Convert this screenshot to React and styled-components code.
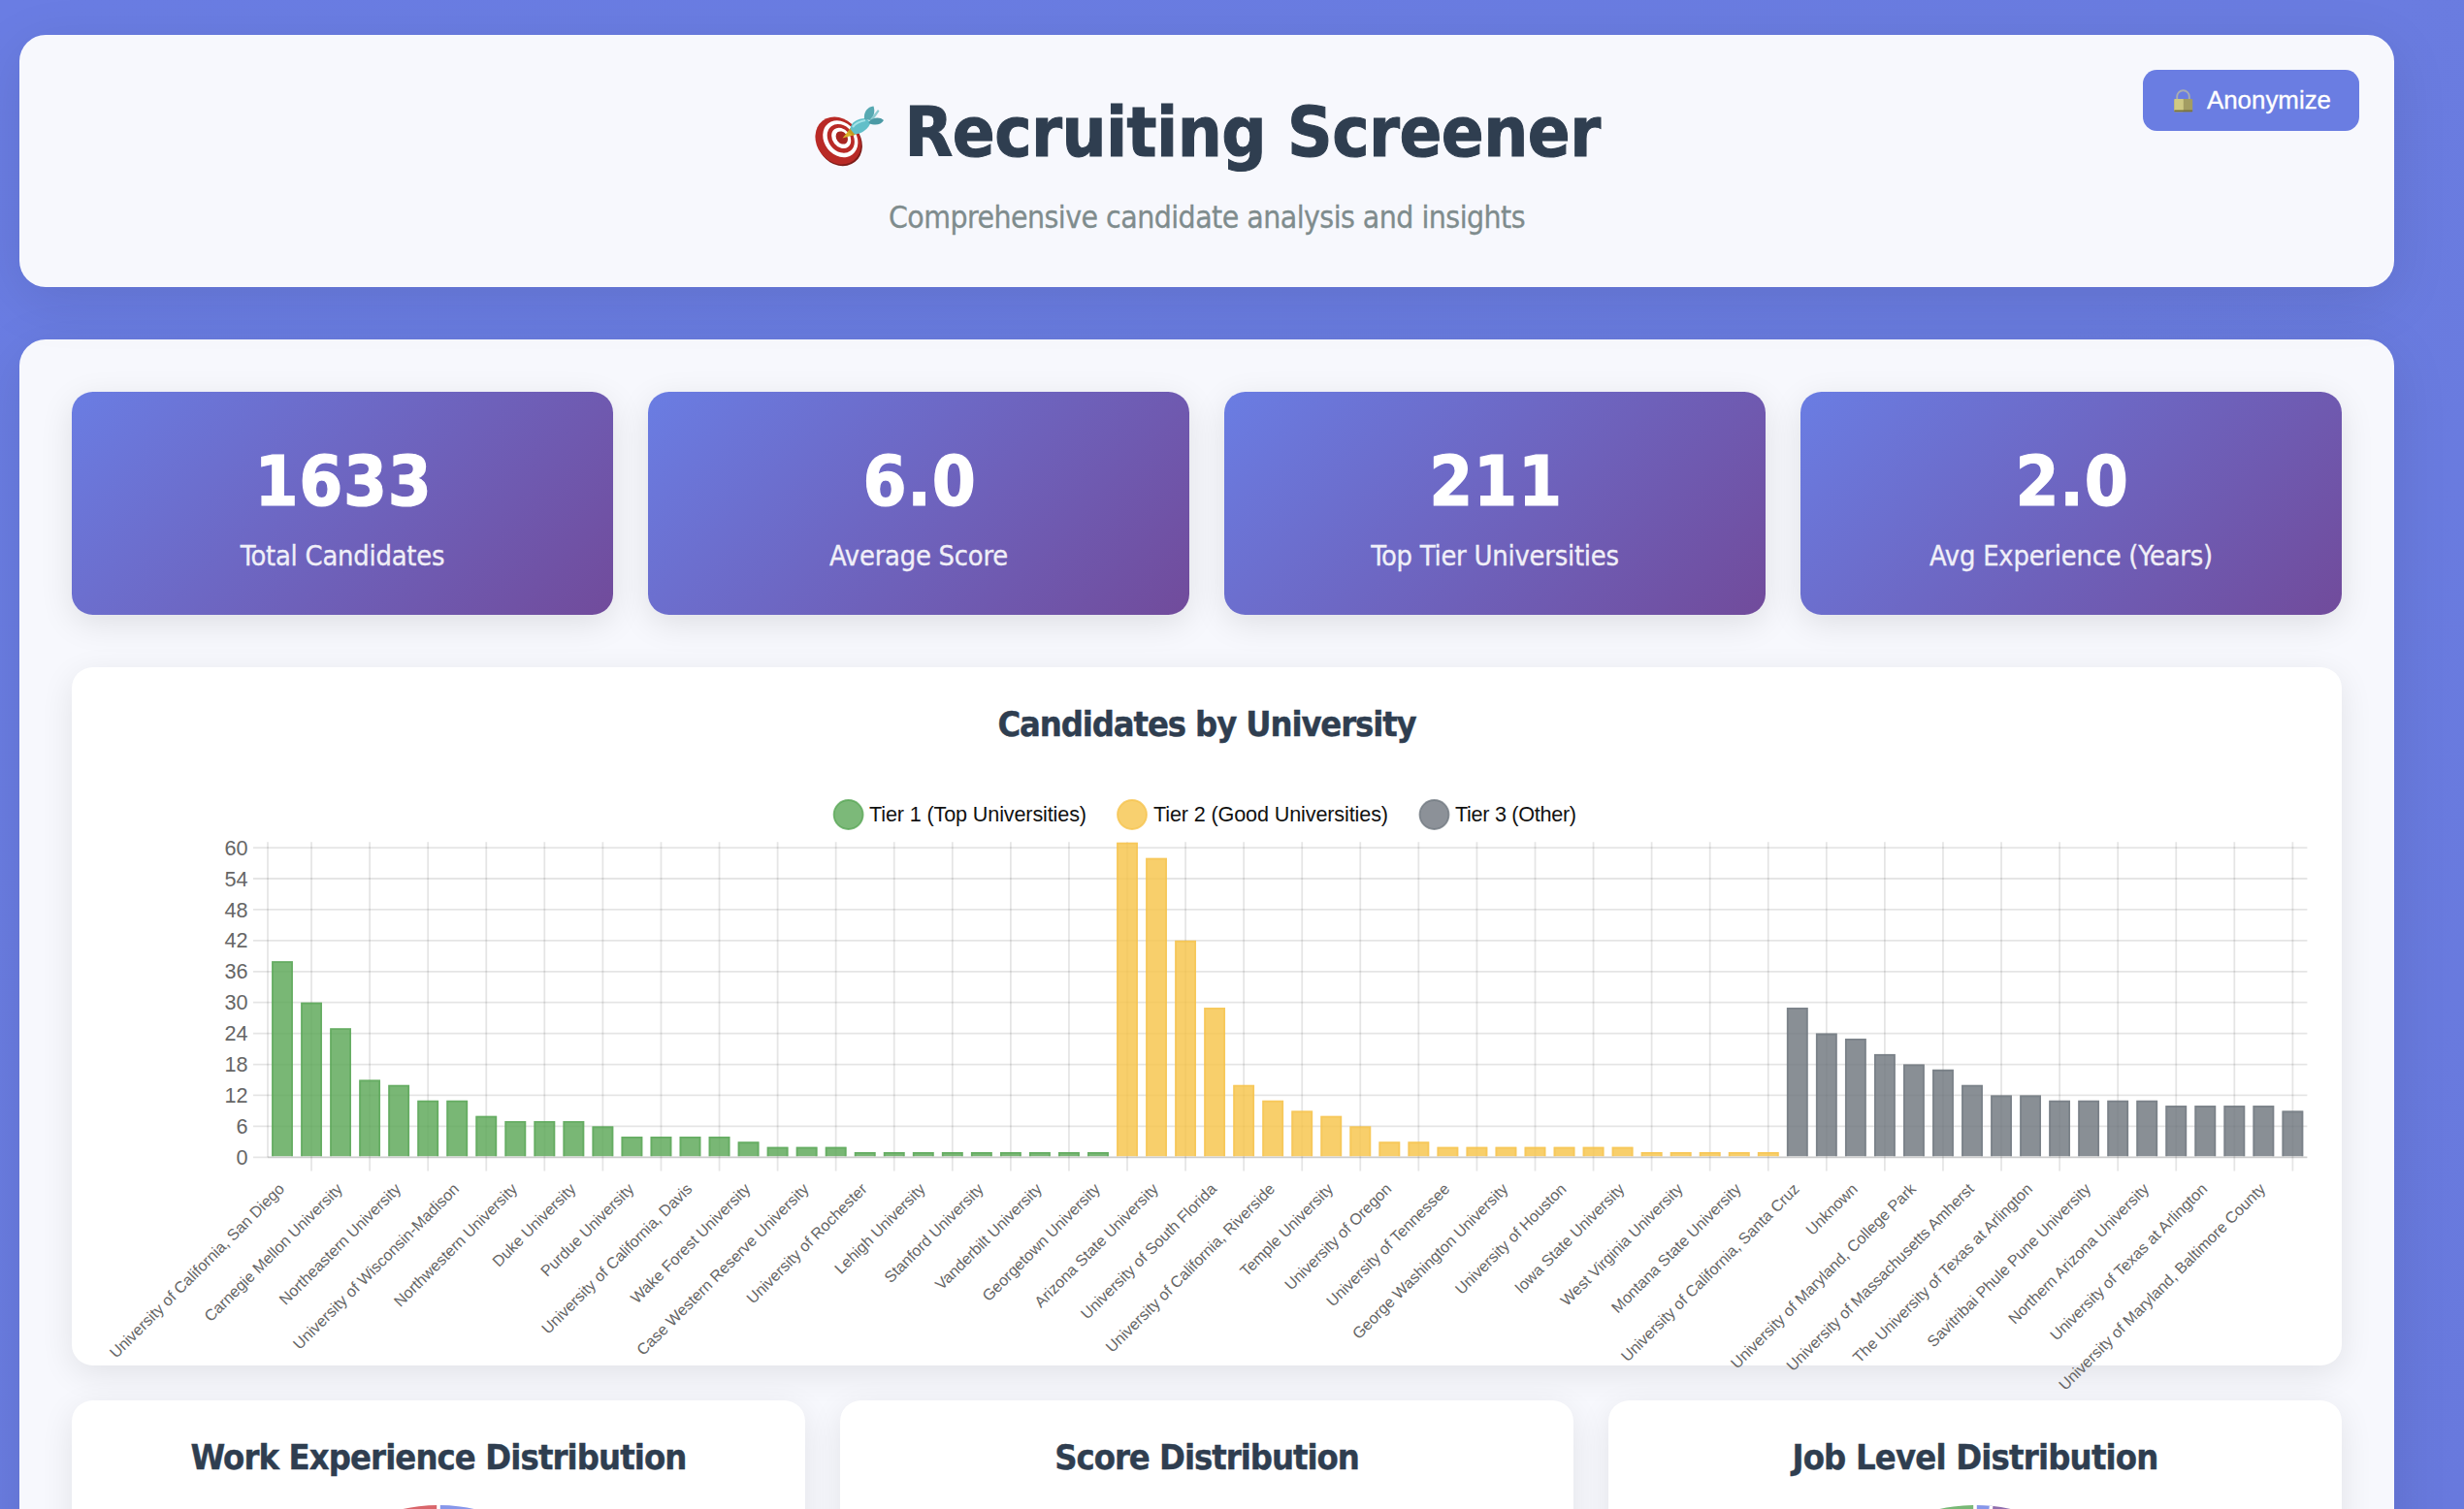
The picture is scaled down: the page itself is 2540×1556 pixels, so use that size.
import React from 'react';
import styled, { createGlobalStyle } from 'styled-components';

const display = '"DejaVu Sans Condensed", "DejaVu Sans", sans-serif';
const ui = '"Liberation Sans", Arial, sans-serif';

const GlobalStyle = createGlobalStyle`
  * { box-sizing: border-box; }
  html, body { margin: 0; }
  body {
    font-family: ${display};
    font-stretch: condensed;
  }
`;

const Viewport = styled.div`
  display: flow-root;
  height: 1556px;
  overflow: hidden;
  background: linear-gradient(135deg, #6a7de3 0%, #6a7ce0 60%, #6879dd 100%);
`;

const Page = styled.div`
  display: flex;
  flex-direction: column;
  gap: 54px;
  width: 2448px;
  margin: 36px 0 0 20px;
`;

const Panel = styled.div`
  background: #f7f8fd;
  border-radius: 27px;
  box-shadow: 0 14px 58px rgba(0, 0, 0, 0.1);
`;

const Header = styled(Panel).attrs({ as: 'header' })`
  position: relative;
  height: 260px;
  padding-top: 55px;
  display: flex;
  flex-direction: column;
  align-items: center;
`;

const Title = styled.h1`
  display: flex;
  align-items: center;
  gap: 20px;
  margin: 0;
  height: 90px;
  font-size: 72px;
  font-weight: 700;
  line-height: 90px;
  letter-spacing: -0.55px;
  -webkit-text-stroke: 1px currentColor;
  color: #2f3e50;
  white-space: nowrap;
`;

const TargetSlot = styled.span`
  display: flex;
  padding-top: 7px;
`;

const Subtitle = styled.p`
  margin: 21px 0 0;
  font-size: 31.7px;
  line-height: 44px;
  letter-spacing: -0.54px;
  -webkit-text-stroke: 0.3px currentColor;
  color: #7f8c8d;
  white-space: nowrap;
`;

const AnonymizeButton = styled.button`
  position: absolute;
  top: 36px;
  right: 36px;
  width: 223px;
  height: 63px;
  padding: 0 29px 0 32px;
  display: flex;
  align-items: center;
  justify-content: space-between;
  border: 0;
  border-radius: 14.4px;
  background: #6a7de2;
  color: #fff;
  font: 500 25.9px/63px ${ui};
  -webkit-text-stroke: 0.3px currentColor;
`;

const Dashboard = styled(Panel).attrs({ as: 'main' })`
  height: 1500px;
  padding: 54px;
`;

const StatGrid = styled.section`
  display: grid;
  grid-template-columns: repeat(4, 1fr);
  gap: 36px;
  margin-bottom: 54px;
`;

const StatCard = styled.div`
  height: 230px;
  padding-top: 47px;
  border-radius: 21.6px;
  background: linear-gradient(135deg, #6a7de3 0%, #714b9b 100%);
  box-shadow: 0 9px 34px rgba(0, 0, 0, 0.1);
  color: #fff;
  text-align: center;
`;

const StatValue = styled.div`
  height: 90px;
  font-size: 72px;
  font-weight: 700;
  line-height: 90px;
  letter-spacing: 0.7px;
  text-indent: 2px;
  -webkit-text-stroke: 1.2px currentColor;
`;

const StatLabel = styled.div`
  margin-top: 14px;
  font-size: 28.8px;
  line-height: 36px;
  letter-spacing: -0.23px;
  -webkit-text-stroke: 0.3px currentColor;
  opacity: 0.9;
`;

const ChartCard = styled.section`
  height: ${(p) => p.$height}px;
  padding-top: 36px;
  border-radius: 21.6px;
  background: #fff;
  box-shadow: 0 9px 34px rgba(0, 0, 0, 0.09);
`;

const ChartTitle = styled.h2`
  margin: 0;
  height: 46px;
  font-size: 36px;
  font-weight: 700;
  line-height: 46px;
  letter-spacing: ${(p) => p.$tracking || -0.9}px;
  -webkit-text-stroke: 0.4px currentColor;
  text-align: center;
  color: #2f3e50;
  white-space: nowrap;
`;

const Plot = styled.svg`
  display: block;
  overflow: visible;
  font-family: ${ui};
`;

const ChartRow = styled.div`
  display: grid;
  grid-template-columns: repeat(3, 1fr);
  gap: 36px;
  margin-top: 36px;
`;

const PieArea = styled.div`
  display: flex;
  justify-content: center;
  margin-top: 26px;
`;

const tiers = [
  { label: 'Tier 1 (Top Universities)', cx: 874.6, tx: 896, tw: 224, fill: '#5ba757', line: '#54a452',
    values: [38, 30, 25, 15, 14, 11, 11, 8, 7, 7, 7, 6, 4, 4, 4, 4, 3, 2, 2, 2, 1, 1, 1, 1, 1, 1, 1, 1, 1] },
  { label: 'Tier 2 (Good Universities)', cx: 1167, tx: 1189, tw: 242, fill: '#f6c44b', line: '#f5c24a',
    values: [61, 58, 42, 29, 14, 11, 9, 8, 6, 3, 3, 2, 2, 2, 2, 2, 2, 2, 1, 1, 1, 1, 1] },
  { label: 'Tier 3 (Other)', cx: 1478.5, tx: 1500, tw: 125, fill: '#6f767e', line: '#6d757d',
    values: [29, 24, 23, 20, 18, 17, 14, 12, 12, 11, 11, 11, 11, 10, 10, 10, 10, 9] },
];

const universities = [
  'University of California, San Diego', 'Carnegie Mellon University', 'Northeastern University',
  'University of Wisconsin-Madison', 'Northwestern University', 'Duke University', 'Purdue University',
  'University of California, Davis', 'Wake Forest University', 'Case Western Reserve University',
  'University of Rochester', 'Lehigh University', 'Stanford University', 'Vanderbilt University',
  'Georgetown University', 'Arizona State University', 'University of South Florida',
  'University of California, Riverside', 'Temple University', 'University of Oregon',
  'University of Tennessee', 'George Washington University', 'University of Houston',
  'Iowa State University', 'West Virginia University', 'Montana State University',
  'University of California, Santa Cruz', 'Unknown', 'University of Maryland, College Park',
  'University of Massachusetts Amherst', 'The University of Texas at Arlington',
  'Savitribai Phule Pune University', 'Northern Arizona University', 'University of Texas at Arlington',
  'University of Maryland, Baltimore County',
];

const LEFT = 276;
const RIGHT = 2378.4;
const BASE = 1193.3;
const UNIT = 5.32;
const STEP = (RIGHT - LEFT) / 70;
const center = (i) => LEFT + STEP * (i + 0.5);

function UniversityChart() {
  let index = 0;
  const bars = tiers.flatMap((t) => t.values.map((v) => ({ v, t, i: index++ })));
  return (
    <Plot width="2340" height="638" viewBox="74 770 2340 638">
      {tiers.map((t) => (
        <g key={t.label}>
          <circle cx={t.cx} cy="840" r="15" fill={t.fill} fillOpacity="0.8" stroke={t.line} strokeOpacity="0.75" strokeWidth="1.8" />
          <text x={t.tx} y="847.3" fontSize="21.6" textLength={t.tw} fill="#111">{t.label}</text>
        </g>
      ))}
      <g stroke="#000" strokeOpacity="0.1" strokeWidth="1.8">
        {Array.from({ length: 11 }, (_, k) => (
          <line key={k} x1="261" x2={RIGHT} y1={BASE - k * 6 * UNIT} y2={BASE - k * 6 * UNIT} />
        ))}
        <line x1={LEFT} x2={LEFT} y1="868.3" y2={BASE} />
        {Array.from({ length: 35 }, (_, k) => (
          <line key={k} x1={center(2 * k + 1)} x2={center(2 * k + 1)} y1="868.3" y2="1207.5" />
        ))}
        <line x1={LEFT} x2={RIGHT} y1={BASE} y2={BASE} />
      </g>
      {bars.map(({ v, t, i }) => {
        const l = center(i) - 10.9;
        const r = center(i) + 10.9;
        const top = BASE - v * UNIT;
        return (
          <g key={i}>
            <rect x={l} y={top} width={r - l} height={1192.2 - top} fill={t.fill} fillOpacity="0.82" />
            <path d={`M${l + 0.9} 1192.2V${top + 0.9}H${r - 0.9}V1192.2`} fill="none" stroke={t.line} strokeOpacity="0.5" strokeWidth="1.8" />
          </g>
        );
      })}
      <g fill="#666" fontSize="21.6" textAnchor="end">
        {Array.from({ length: 11 }, (_, k) => (
          <text key={k} x="255.5" y={BASE - k * 6 * UNIT + 7.6}>{k * 6}</text>
        ))}
      </g>
      <g fill="#666" fontSize="16.2" textAnchor="end">
        {universities.map((name, k) => (
          <text key={k} transform={`translate(${center(2 * k) + 3} 1227) rotate(-45)`}>{name}</text>
        ))}
      </g>
    </Plot>
  );
}

const polar = (deg, r) => [
  r + r * Math.sin((deg * Math.PI) / 180),
  r - r * Math.cos((deg * Math.PI) / 180),
];

function Pie({ slices }) {
  const r = 170;
  return (
    <Plot width={2 * r} height={2 * r} viewBox={`0 0 ${2 * r} ${2 * r}`}>
      {slices.map(([from, to, color]) => {
        const [x1, y1] = polar(from, r);
        const [x2, y2] = polar(to, r);
        return (
          <path key={from} d={`M${r} ${r}L${x1} ${y1}A${r} ${r} 0 ${to - from > 180 ? 1 : 0} 1 ${x2} ${y2}Z`} fill={color} />
        );
      })}
      {slices.map(([from]) => {
        const [x, y] = polar(from, r);
        return <line key={from} x1={r} y1={r} x2={x} y2={y} stroke="#fff" strokeWidth="3.6" />;
      })}
    </Plot>
  );
}

function TargetIcon() {
  return (
    <svg width="74" height="66" viewBox="838 107 74 66">
      <ellipse cx="865.5" cy="147" rx="22" ry="25.5" transform="rotate(-38 865.5 147)" fill="#7d1c19" />
      <ellipse cx="864" cy="145" rx="22" ry="26" transform="rotate(-38 864 145)" fill="#b92a26" />
      <ellipse cx="866.3" cy="143.2" rx="16.6" ry="20.3" transform="rotate(-38 866.3 143.2)" fill="#fff" />
      <ellipse cx="866.8" cy="142.8" rx="12.8" ry="16" transform="rotate(-38 866.8 142.8)" fill="#b92a26" />
      <ellipse cx="867.2" cy="142.4" rx="9" ry="11.5" transform="rotate(-38 867.2 142.4)" fill="#fff" />
      <ellipse cx="867.8" cy="142" rx="5.5" ry="7.2" transform="rotate(-38 867.8 142)" fill="#a82521" />
      <path d="M868.5 142.5L877 132L882.5 138.5Z" fill="#d9b22c" />
      <path d="M874 136L876.5 132L882 137.5L880 140Z" fill="#c49a1f" />
      <path d="M876.5 133C877 126 884 122 892 122L897.5 126C896 132 889 138 881 138.5Z" fill="#62bfc9" />
      <path d="M879 131C882 127 887 125 892 124" fill="none" stroke="#a4e3e8" strokeWidth="2.2" />
      <path d="M891 123C890 116 894 110 900.5 109.5C902 114 901.5 119 897.5 124Z" fill="#57a9b2" />
      <path d="M897 123L905 113L906.5 114.5L899.5 124.5Z" fill="#8ecbd1" />
      <path d="M896 125C900 121 907 120 911 124C908 129.5 901 129.5 895.5 127Z" fill="#4b9aa5" />
    </svg>
  );
}

function LockIcon() {
  return (
    <svg width="20" height="24" viewBox="0 0 20 24">
      <path d="M3.2 11V7.6a6.3 6.3 0 0 1 12.6 0V11" fill="none" stroke="#a9adb0" strokeWidth="1.9" />
      <rect x="0.3" y="10" width="18.9" height="13.2" rx="0.8" fill="#a39d62" />
      <rect x="0.3" y="10" width="9.5" height="13.2" rx="0.8" fill="#cfc983" />
      <rect x="0.3" y="21.6" width="18.9" height="1.6" rx="0.6" fill="#77713f" />
    </svg>
  );
}

const stats = [
  ['1633', 'Total Candidates'],
  ['6.0', 'Average Score'],
  ['211', 'Top Tier Universities'],
  ['2.0', 'Avg Experience (Years)'],
];

export default function App() {
  return (
    <Viewport>
      <GlobalStyle />
      <Page>
        <Header>
          <Title><TargetSlot><TargetIcon /></TargetSlot>Recruiting Screener</Title>
          <Subtitle>Comprehensive candidate analysis and insights</Subtitle>
          <AnonymizeButton><LockIcon />Anonymize</AnonymizeButton>
        </Header>
        <Dashboard>
          <StatGrid>
            {stats.map(([value, label]) => (
              <StatCard key={label}>
                <StatValue>{value}</StatValue>
                <StatLabel>{label}</StatLabel>
              </StatCard>
            ))}
          </StatGrid>
          <ChartCard $height={720}>
            <ChartTitle $tracking={-1.12}>Candidates by University</ChartTitle>
            <UniversityChart />
          </ChartCard>
          <ChartRow>
            <ChartCard $height={600}>
              <ChartTitle>Work Experience Distribution</ChartTitle>
              <PieArea><Pie slices={[[0, 120, '#8797ea'], [120, 250, '#78b876'], [250, 360, '#d9666b']]} /></PieArea>
            </ChartCard>
            <ChartCard $height={600}>
              <ChartTitle $tracking={-1.02}>Score Distribution</ChartTitle>
            </ChartCard>
            <ChartCard $height={600}>
              <ChartTitle $tracking={-0.8}>Job Level Distribution</ChartTitle>
              <PieArea><Pie slices={[[0, 5.6, '#8797ea'], [5.6, 120, '#8f6fae'], [120, 360, '#78b876']]} /></PieArea>
            </ChartCard>
          </ChartRow>
        </Dashboard>
      </Page>
    </Viewport>
  );
}
